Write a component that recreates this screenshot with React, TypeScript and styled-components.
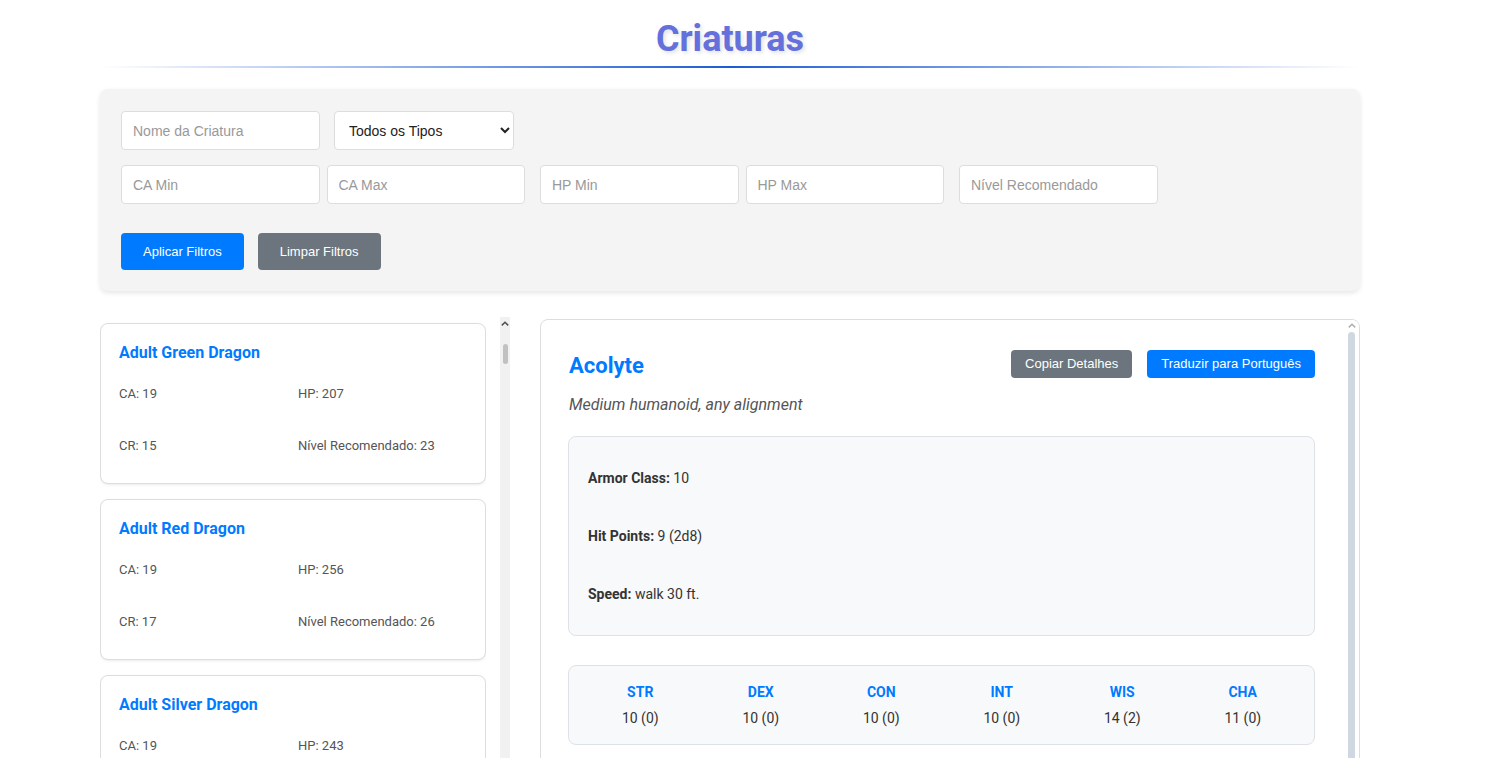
import React from "react";
import styled, { createGlobalStyle } from "styled-components";

const GlobalStyle = createGlobalStyle`
  html, body {
    margin: 0;
    padding: 0;
    overflow: hidden;
    background: #ffffff;
  }
  body {
    font-family: Roboto, "Noto Sans", Arial, sans-serif;
    color: #333;
  }
  * { box-sizing: border-box; }
`;

const Container = styled.div`
  width: 1260px;
  margin-left: 100px;
`;

const Header = styled.header`
  padding-top: 18px;
  text-align: center;
`;

const Title = styled.h1`
  margin: 0;
  font-size: 36px;
  line-height: 42px;
  font-weight: 700;
  color: #6470dc;
  text-shadow: 2px 2px 4px rgba(0, 0, 0, 0.12);
`;

const Divider = styled.div`
  height: 2px;
  margin-top: 6px;
  background: linear-gradient(90deg, rgba(29, 91, 214, 0), #1d5bd6 50%, rgba(29, 91, 214, 0));
`;

const FilterPanel = styled.section`
  margin-top: 21px;
  padding: 22px 21px 21px;
  background: #f4f4f4;
  border-radius: 8px;
  box-shadow: 0 2px 5px rgba(0, 0, 0, 0.1);
`;

const FilterRow = styled.div<{ $gap: number; $top?: number }>`
  display: flex;
  gap: ${(p) => p.$gap}px;
  margin-top: ${(p) => p.$top ?? 0}px;
`;

const FieldGroup = styled.div`
  display: flex;
  gap: 7px;
`;

const TextInput = styled.input<{ $width?: number }>`
  width: ${(p) => p.$width ?? 198.5}px;
  height: 39px;
  padding: 10px 11px;
  border: 1px solid #ddd;
  border-radius: 4px;
  background: #fff;
  font-family: "Liberation Sans", Arial, sans-serif;
  font-size: 14px;
  color: #333;
  outline: none;
  &::placeholder { color: #999; }
`;

const Select = styled.select`
  width: 180px;
  height: 39px;
  padding: 0 10px;
  border: 1px solid #ddd;
  border-radius: 4px;
  background: #fff;
  font-family: "Liberation Sans", Arial, sans-serif;
  font-size: 14px;
  color: #222;
`;

const Button = styled.button<{ $variant: "primary" | "secondary"; $size?: "lg" | "sm" }>`
  border: none;
  border-radius: 4px;
  cursor: pointer;
  color: #fff;
  font-family: "Liberation Sans", Arial, sans-serif;
  font-size: 13px;
  line-height: ${(p) => (p.$size === "sm" ? "16px" : "17px")};
  padding: ${(p) => (p.$size === "sm" ? "6px 14px" : "10px 22px")};
  background: ${(p) => (p.$variant === "primary" ? "#007bff" : "#6c757d")};
  white-space: nowrap;
`;

const Main = styled.main`
  margin-top: 26px;
  display: grid;
  grid-template-columns: 410px 1fr;
  gap: 30px;
  height: 620px;
`;

/* ---------- creature list ---------- */

const ListColumn = styled.div`
  display: flex;
  gap: 14px;
  min-height: 0;
`;

const ListScroll = styled.div`
  width: 386px;
  overflow: hidden;
  padding-top: 6px;
`;

const ScrollTrack = styled.div<{ $width: number; $bg: string }>`
  width: ${(p) => p.$width}px;
  flex: none;
  background: ${(p) => p.$bg};
  display: flex;
  flex-direction: column;
  align-items: center;
`;

const ArrowUp = styled.svg<{ $top: number }>`
  margin-top: ${(p) => p.$top}px;
  flex: none;
`;

const Thumb = styled.div<{ $width: number; $color: string; $top: number; $height?: number }>`
  width: ${(p) => p.$width}px;
  margin-top: ${(p) => p.$top}px;
  background: ${(p) => p.$color};
  border-radius: 4px;
  ${(p) => (p.$height ? `height: ${p.$height}px;` : "flex: 1; margin-bottom: 60px;")}
`;

const Card = styled.article`
  background: #fff;
  border: 1px solid #ddd;
  border-radius: 8px;
  padding: 19px 18px 16px;
  margin-bottom: 15px;
  box-shadow: 0 1px 3px rgba(0, 0, 0, 0.08);
`;

const CardTitle = styled.h3`
  margin: 0;
  font-size: 16px;
  line-height: 19px;
  font-weight: 700;
  color: #007bff;
`;

const StatGrid = styled.div`
  display: grid;
  grid-template-columns: 1fr 1fr;
  gap: 10px;
  margin-top: 11px;
`;

const Stat = styled.p`
  margin: 12px 0;
  font-size: 13px;
  line-height: 18px;
  color: #555;
`;

/* ---------- detail panel ---------- */

const Detail = styled.section`
  margin-top: 2px;
  border: 1px solid #ddd;
  border-radius: 8px;
  background: #fff;
  overflow: hidden;
  display: flex;
  min-height: 0;
`;

const DetailScroll = styled.div`
  flex: 1;
  overflow: hidden;
  padding: 30px 29px 28px 27px;
`;

const DetailHeader = styled.div`
  display: flex;
  align-items: center;
  justify-content: space-between;
  height: 28px;
`;

const DetailTitle = styled.h2`
  margin: 0;
  padding: 4px 0 0 1px;
  font-size: 22px;
  line-height: 28px;
  font-weight: 700;
  color: #007bff;
`;

const ButtonGroup = styled.div`
  display: flex;
  gap: 15px;
`;

const Subtitle = styled.p`
  margin: 17px 0 22px 1px;
  font-size: 16px;
  line-height: 19px;
  font-style: italic;
  color: #555;
`;

const InfoBox = styled.div`
  background: #f8f9fa;
  border: 1px solid #dee2e6;
  border-radius: 8px;
`;

const PropsBox = styled(InfoBox)`
  display: grid;
  gap: 10px;
  padding: 17px 19px;
`;

const PropLine = styled.p`
  margin: 14px 0;
  font-size: 14px;
  line-height: 20px;
  color: #333;
  strong { font-weight: 700; }
`;

const AbilityBox = styled(InfoBox)`
  margin-top: 29px;
  display: grid;
  grid-template-columns: repeat(6, 1fr);
  gap: 8px;
  padding: 16px 15px;
  text-align: center;
`;

const AbilityLabel = styled.div`
  font-size: 14px;
  line-height: 20px;
  font-weight: 700;
  color: #007bff;
`;

const AbilityValue = styled.div`
  margin-top: 6px;
  font-size: 14px;
  line-height: 20px;
  color: #333;
`;

const SectionTitle = styled.h3`
  margin: 29px 0 10px;
  font-size: 18px;
  line-height: 22px;
  color: #007bff;
`;

const SectionText = styled.p`
  margin: 0 0 10px;
  font-size: 14px;
  line-height: 20px;
  color: #333;
`;

type Creature = { name: string; ca: number; hp: number; cr: number };

const creatures: Creature[] = [
  { name: "Adult Green Dragon", ca: 19, hp: 207, cr: 15 },
  { name: "Adult Red Dragon", ca: 19, hp: 256, cr: 17 },
  { name: "Adult Silver Dragon", ca: 19, hp: 243, cr: 16 },
  { name: "Adult White Dragon", ca: 18, hp: 200, cr: 13 },
  { name: "Air Elemental", ca: 15, hp: 90, cr: 5 },
];

const abilities = [
  { key: "STR", value: "10 (0)" },
  { key: "DEX", value: "10 (0)" },
  { key: "CON", value: "10 (0)" },
  { key: "INT", value: "10 (0)" },
  { key: "WIS", value: "14 (2)" },
  { key: "CHA", value: "11 (0)" },
];

const level = (cr: number) => Math.max(1, Math.round(cr * 1.5));

const Chevron = ({ color, top }: { color: string; top: number }) => (
  <ArrowUp $top={top} width="8" height="5" viewBox="0 0 8 5">
    <path d="M0.8 4.4 L4 1.2 L7.2 4.4" fill="none" stroke={color} strokeWidth="1.5" />
  </ArrowUp>
);

export default function App() {
  return (
    <>
      <GlobalStyle />
      <Container>
        <Header>
          <Title>Criaturas</Title>
          <Divider />
        </Header>

        <FilterPanel>
          <FilterRow $gap={14}>
            <TextInput $width={199} placeholder="Nome da Criatura" />
            <Select defaultValue="">
              <option value="">Todos os Tipos</option>
              <option value="dragon">Dragon</option>
              <option value="humanoid">Humanoid</option>
            </Select>
          </FilterRow>
          <FilterRow $gap={15} $top={15}>
            <FieldGroup>
              <TextInput placeholder="CA Min" />
              <TextInput placeholder="CA Max" />
            </FieldGroup>
            <FieldGroup>
              <TextInput placeholder="HP Min" />
              <TextInput placeholder="HP Max" />
            </FieldGroup>
            <TextInput placeholder="Nível Recomendado" />
          </FilterRow>
          <FilterRow $gap={14} $top={29}>
            <Button $variant="primary">Aplicar Filtros</Button>
            <Button $variant="secondary">Limpar Filtros</Button>
          </FilterRow>
        </FilterPanel>

        <Main>
          <ListColumn>
            <ListScroll>
              {creatures.map((c) => (
                <Card key={c.name}>
                  <CardTitle>{c.name}</CardTitle>
                  <StatGrid>
                    <Stat>CA: {c.ca}</Stat>
                    <Stat>HP: {c.hp}</Stat>
                    <Stat>CR: {c.cr}</Stat>
                    <Stat>Nível Recomendado: {level(c.cr)}</Stat>
                  </StatGrid>
                </Card>
              ))}
            </ListScroll>
            <ScrollTrack $width={10} $bg="#f1f1f1">
              <Chevron color="#505050" top={4} />
              <Thumb $width={5} $color="#c1c1c1" $top={18} $height={20} />
            </ScrollTrack>
          </ListColumn>

          <Detail>
            <DetailScroll>
              <DetailHeader>
                <DetailTitle>Acolyte</DetailTitle>
                <ButtonGroup>
                  <Button $variant="secondary" $size="sm">Copiar Detalhes</Button>
                  <Button $variant="primary" $size="sm">Traduzir para Português</Button>
                </ButtonGroup>
              </DetailHeader>
              <Subtitle>Medium humanoid, any alignment</Subtitle>

              <PropsBox>
                <PropLine><strong>Armor Class:</strong> 10</PropLine>
                <PropLine><strong>Hit Points:</strong> 9 (2d8)</PropLine>
                <PropLine><strong>Speed:</strong> walk 30 ft.</PropLine>
              </PropsBox>

              <AbilityBox>
                {abilities.map((a) => (
                  <div key={a.key}>
                    <AbilityLabel>{a.key}</AbilityLabel>
                    <AbilityValue>{a.value}</AbilityValue>
                  </div>
                ))}
              </AbilityBox>

              <SectionTitle>Ações</SectionTitle>
              <SectionText>
                <strong>Club.</strong> Melee Weapon Attack: +2 to hit, reach 5 ft., one target. Hit: 2 (1d4) bludgeoning damage.
              </SectionText>
            </DetailScroll>
            <ScrollTrack $width={15} $bg="#ffffff">
              <Chevron color="#b0b0b0" top={3} />
              <Thumb $width={7} $color="#cfd8e0" $top={4} />
            </ScrollTrack>
          </Detail>
        </Main>
      </Container>
    </>
  );
}
